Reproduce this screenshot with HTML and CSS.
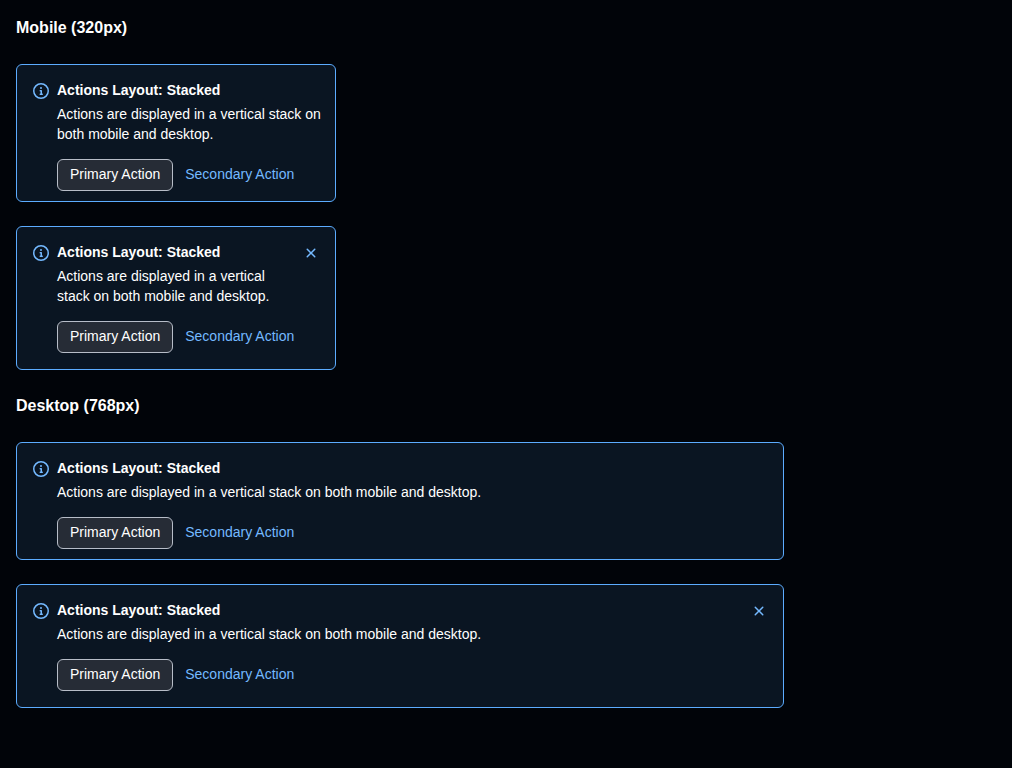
FILE: index.html
```html
<!DOCTYPE html>
<html lang="en">
<head>
<meta charset="utf-8">
<meta name="viewport" content="width=device-width, initial-scale=1">
<title>Banner actions layout</title>
<link rel="stylesheet" href="styles.css">
</head>
<body>
<svg class="sprite" aria-hidden="true">
  <symbol id="info" viewBox="0 0 16 16"><path d="M0 8a8 8 0 1 1 16 0A8 8 0 0 1 0 8Zm8-6.5a6.5 6.5 0 1 0 0 13 6.5 6.5 0 0 0 0-13ZM6.5 7.75A.75.75 0 0 1 7.25 7h1a.75.75 0 0 1 .75.75v2.75h.25a.75.75 0 0 1 0 1.5h-2a.75.75 0 0 1 0-1.5h.25v-2h-.25a.75.75 0 0 1-.75-.75ZM8 6a1 1 0 1 1 0-2 1 1 0 0 1 0 2Z"/></symbol>
  <symbol id="close" viewBox="0 0 16 16"><path d="M3.72 3.72a.75.75 0 0 1 1.06 0L8 6.94l3.22-3.22a.749.749 0 0 1 1.275.326.749.749 0 0 1-.215.734L9.06 8l3.22 3.22a.749.749 0 0 1-.326 1.275.749.749 0 0 1-.734-.215L8 9.06l-3.22 3.22a.751.751 0 0 1-1.042-.018.751.751 0 0 1-.018-1.042L6.94 8 3.72 4.78a.75.75 0 0 1 0-1.06Z"/></symbol>
</svg>
<main class="page">
  <h2 class="heading">Mobile (320px)</h2>
  <div class="group group-mobile">
    <section class="banner">
      <svg class="icon banner-icon" aria-hidden="true"><use href="#info"/></svg>
      <div class="content">
        <h3 class="title">Actions Layout: Stacked</h3>
        <p class="description">Actions are displayed in a vertical stack on both mobile and desktop.</p>
        <div class="actions">
          <button type="button" class="button primary">Primary Action</button>
          <button type="button" class="button secondary">Secondary Action</button>
        </div>
      </div>
    </section>
    <section class="banner dismissible">
      <svg class="icon banner-icon" aria-hidden="true"><use href="#info"/></svg>
      <div class="content">
        <h3 class="title">Actions Layout: Stacked</h3>
        <p class="description">Actions are displayed in a vertical stack on both mobile and desktop.</p>
        <div class="actions">
          <button type="button" class="button primary">Primary Action</button>
          <button type="button" class="button secondary">Secondary Action</button>
        </div>
      </div>
      <button type="button" class="dismiss" aria-label="Dismiss banner"><svg class="icon" aria-hidden="true"><use href="#close"/></svg></button>
    </section>
  </div>
  <h2 class="heading">Desktop (768px)</h2>
  <div class="group group-desktop">
    <section class="banner">
      <svg class="icon banner-icon" aria-hidden="true"><use href="#info"/></svg>
      <div class="content">
        <h3 class="title">Actions Layout: Stacked</h3>
        <p class="description">Actions are displayed in a vertical stack on both mobile and desktop.</p>
        <div class="actions">
          <button type="button" class="button primary">Primary Action</button>
          <button type="button" class="button secondary">Secondary Action</button>
        </div>
      </div>
    </section>
    <section class="banner dismissible">
      <svg class="icon banner-icon" aria-hidden="true"><use href="#info"/></svg>
      <div class="content">
        <h3 class="title">Actions Layout: Stacked</h3>
        <p class="description">Actions are displayed in a vertical stack on both mobile and desktop.</p>
        <div class="actions">
          <button type="button" class="button primary">Primary Action</button>
          <button type="button" class="button secondary">Secondary Action</button>
        </div>
      </div>
      <button type="button" class="dismiss" aria-label="Dismiss banner"><svg class="icon" aria-hidden="true"><use href="#close"/></svg></button>
    </section>
  </div>
</main>
</body>
</html>
```
FILE: styles.css
```css
* {
  box-sizing: border-box;
}

body {
  margin: 0;
  background: #010409;
  color: #ffffff;
  font-family: "Liberation Sans", Arial, sans-serif;
  font-size: 14px;
  line-height: 20px;
}

.sprite {
  display: none;
}

.page,
.group {
  display: flex;
  flex-direction: column;
  gap: 24px;
}

.page {
  padding: 16px;
}

.group-mobile {
  max-width: 320px;
}

.group-desktop {
  max-width: 768px;
}

.heading,
.title,
.description {
  margin: 0;
}

.heading {
  font-size: 16px;
  line-height: 24px;
}

.icon {
  display: block;
  width: 16px;
  height: 16px;
  fill: #74b9ff;
}

.banner {
  display: flex;
  align-items: flex-start;
  padding: 10px 8px 10px 16px;
  border: 1px solid #5cacff;
  border-radius: 6px;
  background: #0a1522;
}

.dismissible {
  padding-bottom: 16px;
}

.banner-icon {
  flex: none;
  margin: 8px 8px 0 0;
}

.content {
  flex: 1;
  min-width: 0;
  padding-top: 5px;
}

.title {
  font-size: 14px;
  line-height: 20px;
}

.description {
  margin-top: 4px;
}

.actions {
  display: flex;
  margin-top: 15px;
}

.button {
  flex: none;
  height: 32px;
  padding: 0 12px 2px;
  border: 0;
  border-radius: 6px;
  background: none;
  font: inherit;
  white-space: nowrap;
}

.primary {
  border: 1px solid #b7bdc8;
  background: #262c36;
  color: #ffffff;
}

.secondary {
  color: #74b9ff;
}

.dismiss {
  display: grid;
  place-items: center;
  flex: none;
  width: 32px;
  height: 32px;
  padding: 0;
  border: 0;
  border-radius: 6px;
  background: none;
}
```
